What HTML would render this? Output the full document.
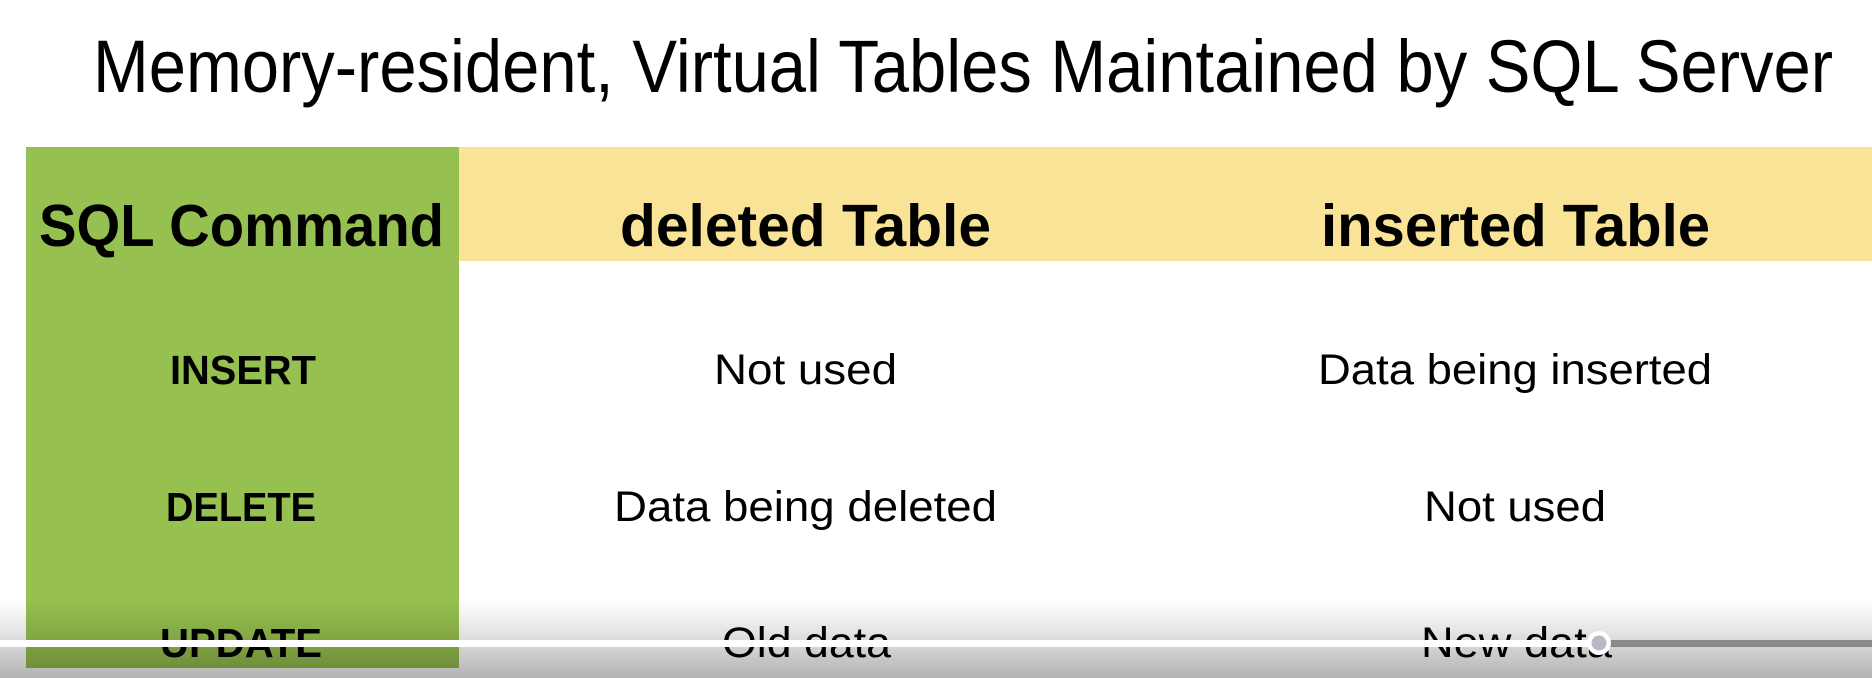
<!DOCTYPE html>
<html><head><meta charset="utf-8"><style>
html,body{margin:0;padding:0;width:1872px;height:678px;overflow:hidden;background:#fff}
svg{display:block}
</style></head><body>
<svg width="1872" height="678" viewBox="0 0 1872 678" xmlns="http://www.w3.org/2000/svg" font-family="Liberation Sans, sans-serif">
<defs>
<linearGradient id="ov" x1="0" y1="0" x2="0" y2="1">
<stop offset="0" stop-color="#000" stop-opacity="0"/>
<stop offset="0.4" stop-color="#000" stop-opacity="0.1"/>
<stop offset="1" stop-color="#000" stop-opacity="0.3"/>
</linearGradient>
</defs>
<rect width="1872" height="678" fill="#fff"/>
<text x="93" y="92" font-size="74" textLength="1740" lengthAdjust="spacingAndGlyphs" fill="#000">Memory-resident, Virtual Tables Maintained by SQL Server</text>
<rect x="459" y="147" width="1413" height="114" fill="#f9e397"/>
<rect x="26" y="147" width="433" height="521" fill="#96c04f"/>
<g font-weight="bold" fill="#000">
<text x="39" y="246" font-size="59" textLength="405" lengthAdjust="spacingAndGlyphs">SQL Command</text>
<text x="620" y="246" font-size="59" textLength="371" lengthAdjust="spacingAndGlyphs">deleted Table</text>
<text x="1321" y="246" font-size="59" textLength="389" lengthAdjust="spacingAndGlyphs">inserted Table</text>
<text x="170" y="384" font-size="41" textLength="146" lengthAdjust="spacingAndGlyphs">INSERT</text>
<text x="166" y="521" font-size="41" textLength="150" lengthAdjust="spacingAndGlyphs">DELETE</text>
<text x="160" y="657" font-size="41" textLength="162" lengthAdjust="spacingAndGlyphs">UPDATE</text>
</g>
<g fill="#000" font-size="43">
<text x="714" y="384" textLength="183" lengthAdjust="spacingAndGlyphs">Not used</text>
<text x="1318" y="384" textLength="394" lengthAdjust="spacingAndGlyphs">Data being inserted</text>
<text x="614" y="521" textLength="383" lengthAdjust="spacingAndGlyphs">Data being deleted</text>
<text x="1424" y="521" textLength="182" lengthAdjust="spacingAndGlyphs">Not used</text>
<text x="722" y="657" textLength="169" lengthAdjust="spacingAndGlyphs">Old data</text>
<text x="1421" y="657" textLength="191" lengthAdjust="spacingAndGlyphs">New data</text>
</g>
<rect x="0" y="598" width="1872" height="80" fill="url(#ov)"/>
<rect x="1600" y="640" width="272" height="7" fill="#8a8a8a"/>
<rect x="0" y="640" width="1600" height="7" fill="#fff"/>
<circle cx="1599" cy="643" r="12" fill="#fff"/>
<circle cx="1599" cy="643" r="7.5" fill="#b9b8c4"/>
</svg>
</body></html>
